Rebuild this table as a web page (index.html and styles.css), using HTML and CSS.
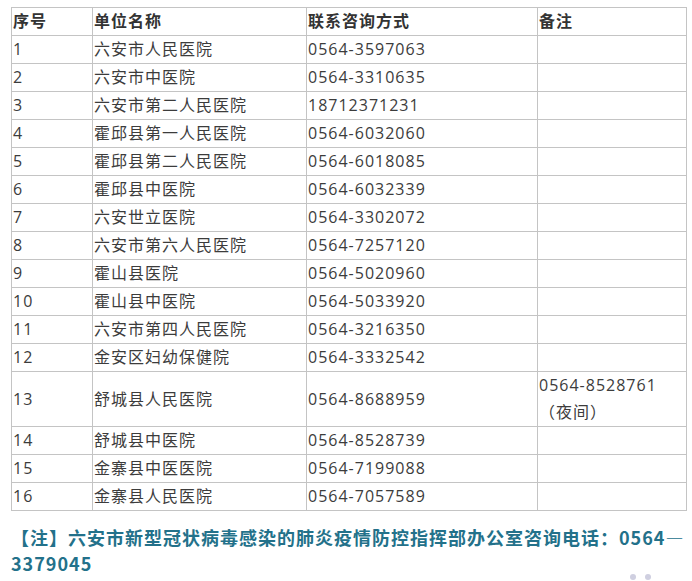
FILE: index.html
```html
<!DOCTYPE html>
<html lang="zh-CN">
<head>
<meta charset="utf-8">
<title>咨询电话</title>
<link rel="stylesheet" href="styles.css">
</head>
<body>
<div class="page">
  <table class="tbl">
    <colgroup>
      <col class="c1"><col class="c2"><col class="c3"><col class="c4">
    </colgroup>
    <thead>
      <tr><th>序号</th><th>单位名称</th><th>联系咨询方式</th><th>备注</th></tr>
    </thead>
    <tbody>
      <tr><td>1</td><td>六安市人民医院</td><td>0564-3597063</td><td></td></tr>
      <tr><td>2</td><td>六安市中医院</td><td>0564-3310635</td><td></td></tr>
      <tr><td>3</td><td>六安市第二人民医院</td><td>18712371231</td><td></td></tr>
      <tr><td>4</td><td>霍邱县第一人民医院</td><td>0564-6032060</td><td></td></tr>
      <tr><td>5</td><td>霍邱县第二人民医院</td><td>0564-6018085</td><td></td></tr>
      <tr><td>6</td><td>霍邱县中医院</td><td>0564-6032339</td><td></td></tr>
      <tr><td>7</td><td>六安世立医院</td><td>0564-3302072</td><td></td></tr>
      <tr><td>8</td><td>六安市第六人民医院</td><td>0564-7257120</td><td></td></tr>
      <tr><td>9</td><td>霍山县医院</td><td>0564-5020960</td><td></td></tr>
      <tr><td>10</td><td>霍山县中医院</td><td>0564-5033920</td><td></td></tr>
      <tr><td>11</td><td>六安市第四人民医院</td><td>0564-3216350</td><td></td></tr>
      <tr><td>12</td><td>金安区妇幼保健院</td><td>0564-3332542</td><td></td></tr>
      <tr class="tall"><td>13</td><td>舒城县人民医院</td><td>0564-8688959</td><td class="note-cell"><div>0564-8528761</div><div>（夜间）</div></td></tr>
      <tr><td>14</td><td>舒城县中医院</td><td>0564-8528739</td><td></td></tr>
      <tr><td>15</td><td>金寨县中医医院</td><td>0564-7199088</td><td></td></tr>
      <tr><td>16</td><td>金寨县人民医院</td><td>0564-7057589</td><td></td></tr>
    </tbody>
  </table>
  <p class="note">【注】六安市新型冠状病毒感染的肺炎疫情防控指挥部办公室咨询电话：0564—3379045</p>
  <div class="dots"><span class="dot"></span><span class="dot"></span></div>
</div>
</body>
</html>
```
FILE: styles.css
```css
html, body {
  margin: 0;
  padding: 0;
  background: #ffffff;
}
.page {
  padding: 7px 6px 0 11px;
  font-family: "Open Sans", "Noto Sans CJK SC", sans-serif;
  color: #3c3c3c;
}
.tbl {
  border-collapse: collapse;
  table-layout: fixed;
  width: 675px;
  font-size: 16px;
  letter-spacing: 1px;
}
.c1 { width: 81px; }
.c2 { width: 214px; }
.c3 { width: 231px; }
.c4 { width: 149px; }
.tbl th, .tbl td {
  border: 1px solid #c4c4c4;
  height: 27px;
  padding: 0 0 0 1px;
  text-align: left;
  vertical-align: middle;
  line-height: 27px;
  white-space: nowrap;
}
.tbl th {
  font-weight: bold;
  color: #333333;
}
.tbl tr.tall td {
  height: 54px;
}
.note-cell div {
  line-height: 27px;
}
.note {
  margin: 13px 0 0 0;
  font-family: "Noto Sans CJK TC", sans-serif;
  font-size: 18px;
  font-weight: bold;
  letter-spacing: 1px;
  line-height: 26px;
  color: #23718a;
  word-break: break-all;
}
.dots {
  display: flex;
  gap: 9px;
  padding-left: 619px;
  margin-top: -2px;
}
.dot {
  width: 6px;
  height: 6px;
  border-radius: 50%;
  background: #cfcfe0;
}
```
